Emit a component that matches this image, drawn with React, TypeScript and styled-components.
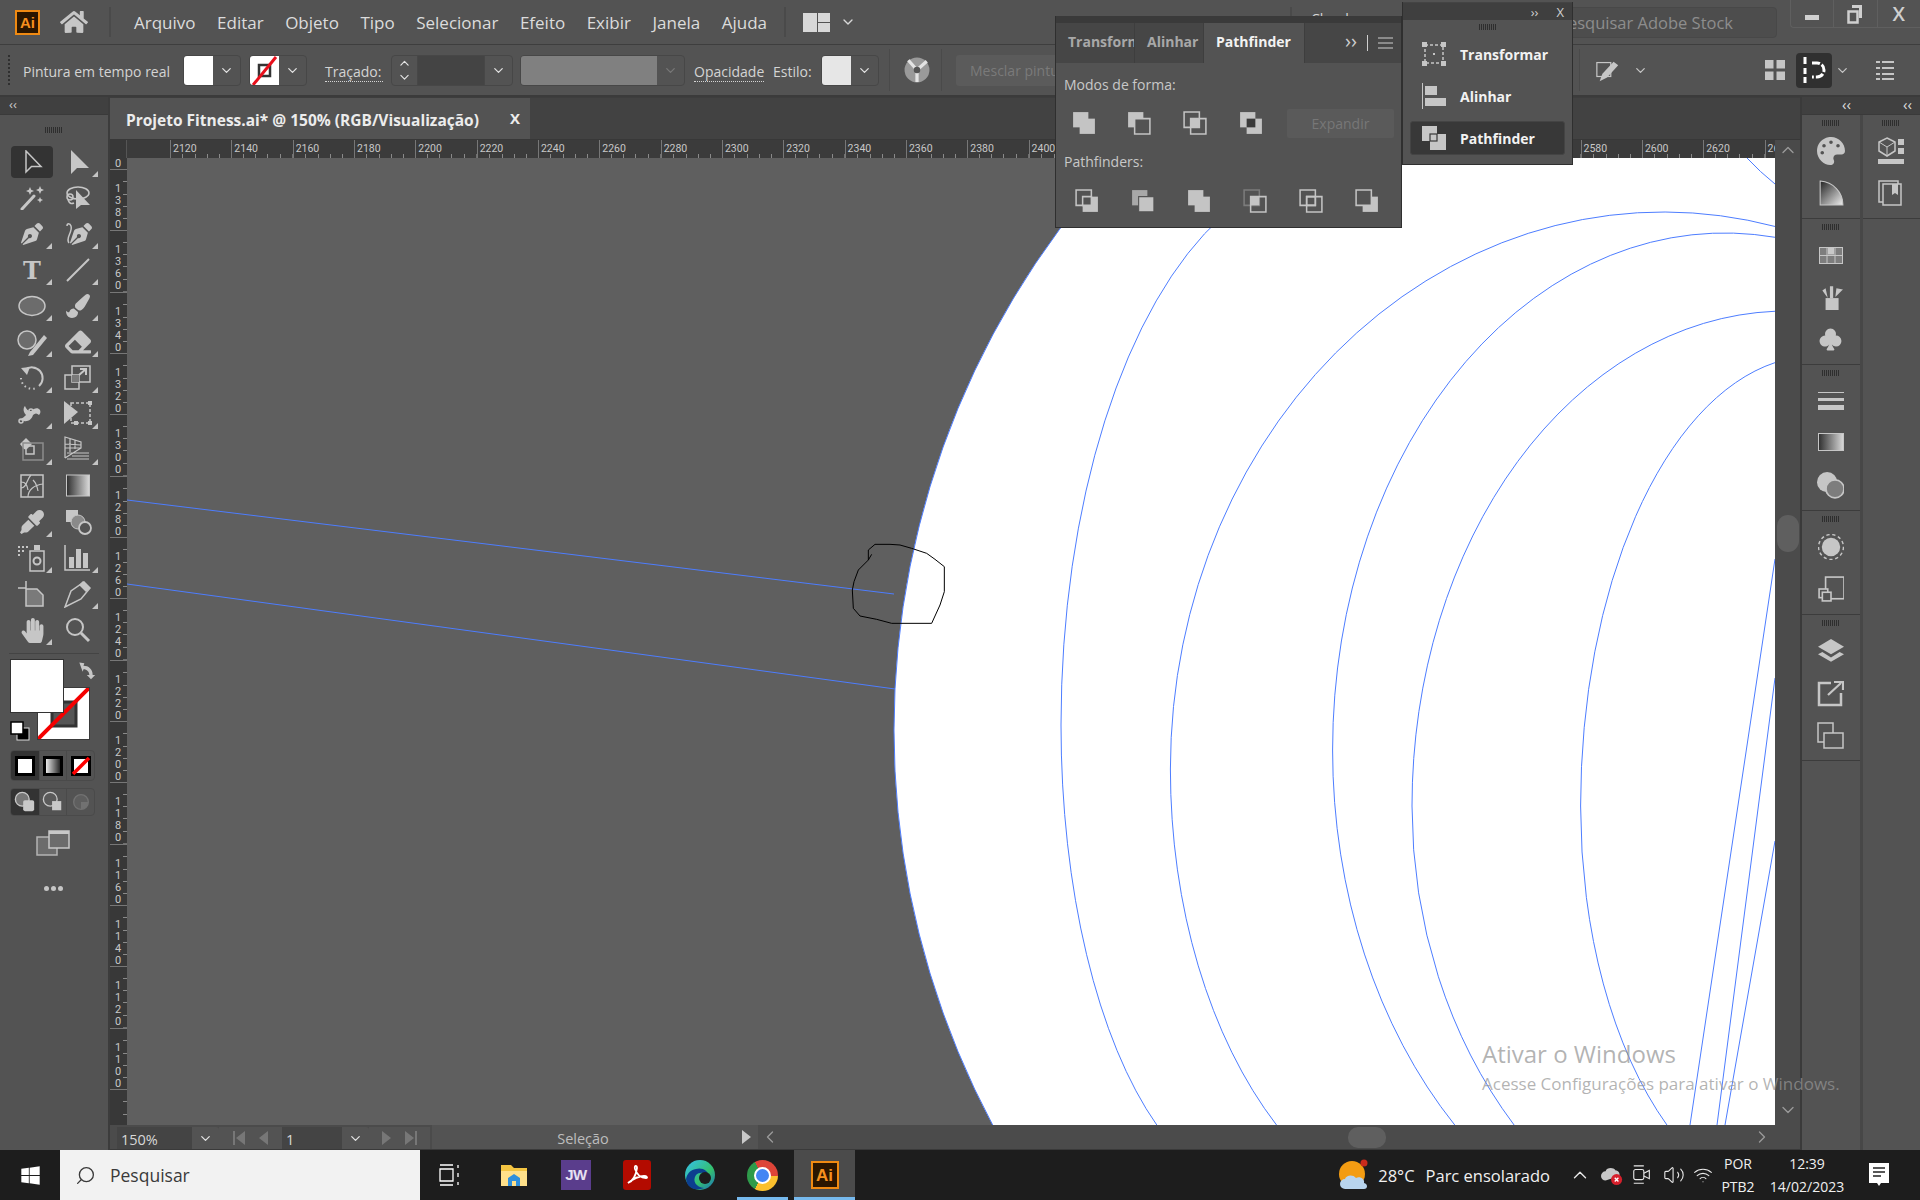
import React from "react";
import styled, { createGlobalStyle } from "styled-components";
import {
  FaHome, FaPenNib, FaPaintBrush, FaEraser, FaEyeDropper, FaHandPaper, FaPalette, FaWindows,
} from "react-icons/fa";
import { BsSuitClubFill } from "react-icons/bs";
import { ChevronDown, ChevronUp, ChevronLeft, ChevronRight, Volume2, Wifi, Search } from "lucide-react";

const UI = `"Open Sans", "Noto Sans", Arial, sans-serif`;
const BG = "#535353";
const ICON = "#c6c6c6";

const Global = createGlobalStyle`
  html, body { margin: 0; padding: 0; background: #1c1c1c; }
  * { box-sizing: border-box; }
`;

const Screen = styled.div`
  position: relative; width: 1920px; height: 1200px; overflow: hidden;
  display: flex; flex-direction: column; background: ${BG}; font-family: ${UI}; color: #d8d8d8;
`;

/* ---------- title bar ---------- */
const TitleBar = styled.header`
  height: 45px; display: flex; align-items: center; background: ${BG}; border-bottom: 1px solid #3e3e3e; flex: none;
`;
const AiLogo = styled.div<{ $size?: number }>`
  width: ${p => p.$size ?? 25}px; height: ${p => p.$size ?? 25}px; background: #2b1600; border: 2px solid #f08a12;
  color: #f6901e; font: 700 ${p => ((p.$size ?? 25) > 25 ? 17 : 15)}px/1 "Liberation Sans", sans-serif;
  display: flex; align-items: center; justify-content: center; flex: none;
`;
const LogoSlot = styled.div`margin-left: 15px; display: flex;`;
const HomeSlot = styled.div`margin-left: 20px; width: 29px; display: flex; color: ${ICON}; font-size: 28px;`;
const TitleSep = styled.div<{ $ml: number }>`width: 2px; height: 30px; background: #4a4a4a; margin-left: ${p => p.$ml}px; flex: none;`;
const MenuList = styled.nav`display: flex; gap: 21.5px; margin-left: 23px; width: 650px;`;
const MenuItem = styled.span`font-size: 17px; color: #dcdcdc; white-space: nowrap;`;
const WorkspaceSlot = styled.div`margin-left: 17px; display: flex; align-items: center; gap: 10px; color: #d8d8d8;`;
const RightCluster = styled.div`margin-left: auto; display: flex; align-items: center; height: 100%; flex: none;`;
const CloudLabel = styled.div`
  width: 210px; height: 30px; border-left: 2px solid #4a4a4a; padding: 2px 0 0 19px; font-size: 14px; color: #d8d8d8; white-space: nowrap;
`;
const StockSearch = styled.div`
  width: 277px; height: 31px; border: 1px solid #484848; border-radius: 4px; background: #4d4d4d;
  color: #8d8d8d; font-size: 16.5px; line-height: 29px; padding-left: 57px; margin-right: 13px; white-space: nowrap;
`;
const WinControls = styled.div`
  width: 130px; height: 28px; align-self: flex-start; display: flex; border: 1px solid #5f5f5f; border-top: 0; border-right: 0;
  border-bottom-left-radius: 4px;
`;
const WinBtn = styled.div`
  flex: 1; display: flex; align-items: center; justify-content: center; color: #cfcfcf; font-size: 20px; font-weight: 600;
  & + & { border-left: 1px solid #5f5f5f; }
`;

/* ---------- control bar ---------- */
const ControlBar = styled.div`
  height: 52px; display: flex; align-items: center; background: ${BG}; border-bottom: 2px solid #3b3b3b; flex: none; font-size: 14px;
`;
const Grip = styled.div`
  width: 2px; height: 30px; margin-left: 8px;
  background: repeating-linear-gradient(180deg, #2f2f2f 0 2px, transparent 2px 4px); flex: none;
`;
const CtlLabel = styled.span<{ $ml: number; $w?: number; $dotted?: boolean }>`
  margin-left: ${p => p.$ml}px; ${p => (p.$w ? `width:${p.$w}px;` : "")} color: #d4d4d4; white-space: nowrap; flex: none; margin-top: 2px;
  ${p => (p.$dotted ? "border-bottom: 1px dotted #d4d4d4; line-height: 19px; margin-top: 3px;" : "")}
`;
const Combo = styled.div<{ $ml: number; $w: number }>`
  margin-left: ${p => p.$ml}px; width: ${p => p.$w}px; height: 31px; display: flex; align-items: stretch; flex: none;
  border: 1px solid #474747; border-radius: 4px; overflow: hidden;
`;
const Swatch = styled.div<{ $c: string }>`width: 29px; background: ${p => p.$c}; flex: none; position: relative;`;
const Caret = styled.div<{ $dim?: boolean }>`
  width: 27px; flex: none; display: flex; align-items: center; justify-content: center; color: ${p => (p.$dim ? "#787878" : "#e2e2e2")};
`;
const Stepper = styled.div`width: 26px; flex: none; display: flex; flex-direction: column; align-items: center; justify-content: center; color: #e2e2e2; border-right: 1px solid #474747;`;
const DarkField = styled.div`flex: 1; background: #444444; border-right: 1px solid #474747;`;
const GreyBlock = styled.div`width: 136px; background: #808080; flex: none;`;
const MergeBtn = styled.div`
  margin-left: 14px; width: 250px; height: 31px; background: #5b5b5b; border-radius: 3px; color: #7a7a7a;
  line-height: 31px; padding-left: 14px; flex: none; white-space: nowrap;
`;
const CtlSep = styled.div<{ $ml: number }>`width: 1px; height: 42px; background: #4a4a4a; margin-left: ${p => p.$ml}px; flex: none;`;
const CtlIcon = styled.div<{ $ml: number; $w?: number }>`
  margin-left: ${p => p.$ml}px; width: ${p => p.$w ?? 26}px; display: flex; justify-content: center; color: ${ICON}; flex: none;
`;
const SnapBtn = styled.div`
  margin-left: 10px; width: 36px; height: 35px; border-radius: 4px; background: #303030; display: flex;
  align-items: center; justify-content: center; flex: none;
`;

/* ---------- workspace ---------- */
const Workspace = styled.div`flex: 1; min-height: 0; display: flex;`;

const LeftTools = styled.aside`width: 110px; flex: none; display: flex; flex-direction: column; border-right: 2px solid #3c3c3c;`;
const CollapseStrip = styled.div`
  height: 18px; background: #404040; color: #c8c8c8; font-size: 13px; line-height: 15px; padding-left: 9px; flex: none; border-bottom: 1px solid #3a3a3a;
`;
const GripH = styled.div`
  height: 6px; width: 18px;
  background: repeating-linear-gradient(90deg, #2e2e2e 0 1px, transparent 1px 2px);
`;
const GripRow = styled.div<{ $h: number }>`height: ${p => p.$h}px; display: flex; align-items: center; justify-content: center; flex: none;`;
const ToolGrid = styled.div`display: grid; grid-template-columns: 46px 46px; grid-auto-rows: 36px; padding-left: 9px; flex: none;`;
const ToolCell = styled.div<{ $sel?: boolean }>`
  position: relative; display: flex; align-items: center; justify-content: center; color: ${ICON}; border-radius: 4px;
  ${p => (p.$sel ? "background:#333333; margin: 2px;" : "")}
`;
const Flyout = styled.span`
  position: absolute; right: 3px; bottom: 3px; width: 0; height: 0;
  border-left: 6px solid transparent; border-bottom: 6px solid #c4c4c4;
`;
const ToolRule = styled.div`height: 1px; background: #444; margin: 5px 9px 5px; flex: none;`;
const ColorArea = styled.div`position: relative; height: 86px; margin-bottom: 5px; flex: none;`;
const FillBox = styled.div`position: absolute; left: 10px; top: 0; width: 54px; height: 54px; background: #fff; border: 1px solid #333; z-index: 2;`;
const StrokeBox = styled.div`position: absolute; left: 37px; top: 28px; width: 53px; height: 53px; border: 1px solid #3a3a3a;`;
const SwapSlot = styled.div`position: absolute; left: 76px; top: 1px; color: ${ICON};`;
const DefaultSlot = styled.div`position: absolute; left: 10px; top: 62px;`;
const Segments = styled.div<{ $h: number }>`
  margin: 0 13px 7px 10px; height: ${p => p.$h}px; display: grid; grid-template-columns: 1fr 1fr 1fr; border: 1px solid #4a4a4a; border-radius: 4px; overflow: hidden; flex: none;
`;
const Seg = styled.div<{ $sel?: boolean }>`
  display: flex; align-items: center; justify-content: center; background: ${p => (p.$sel ? "#333" : "transparent")};
  & + & { border-left: 1px solid #4a4a4a; }
`;
const CenterSlot = styled.div<{ $mt: number }>`margin-top: ${p => p.$mt}px; display: flex; justify-content: center; gap: 2px; padding-right: 2px; flex: none;`;
const Dot = styled.span`width: 5px; height: 5px; border-radius: 50%; background: ${ICON};`;

/* ---------- document area ---------- */
const DocArea = styled.main`width: 1690px; flex: none; display: flex; flex-direction: column; min-width: 0;`;
const TabStrip = styled.div`height: 43px; flex: none; background: #424242; display: flex; border-top: 1px solid #3d3d3d; border-bottom: 1px solid #383838;`;
const DocTab = styled.div`
  width: 420px; background: ${BG}; display: flex; align-items: center; justify-content: space-between;
  padding: 3px 10px 0 16px; font-weight: 700; font-size: 15.5px; color: #ececec; white-space: nowrap;
`;
const TabClose = styled.span`font-size: 15px; font-weight: 700; margin-top: -5px;`;
const RulerRowH = styled.div`height: 18px; flex: none; display: flex; background: #3b3b3b;`;
const RulerCorner = styled.div`width: 17px; flex: none; border-right: 1px solid #555; position: relative; background: #383838;`;
const RulerTrack = styled.div`flex: 1; min-width: 0; display: flex; overflow: hidden; padding-left: 43px;`;
const RulerH = styled.div`
  width: 61.33px; flex: none; border-left: 1px solid #777; padding: 2px 0 0 2px; font: 10.5px/13px Roboto, sans-serif; color: #c8c8c8;
  background: repeating-linear-gradient(90deg, transparent 0 11.27px, #8a8a8a 11.27px 12.27px) bottom / 100% 4px no-repeat;
`;
const ScrollCap = styled.div`width: 25px; flex: none; background: #4a4a4a; display: flex; justify-content: center; align-items: flex-start; color: #9a9a9a;`;
const CanvasRow = styled.div`height: 967px; flex: none; display: flex;`;
const RulerV = styled.div`width: 17px; flex: none; background: #383838; overflow: hidden; display: flex; flex-direction: column;`;
const RulerVCell = styled.div<{ $first?: boolean }>`
  height: ${p => (p.$first ? 11 : 61.33)}px; flex: none; border-top: ${p => (p.$first ? "0" : "1px solid #777")};
  padding-top: ${p => (p.$first ? 0 : 13)}px; display: flex; flex-direction: column; align-items: flex-start; padding-left: 5px;
  font: 11px/12px Roboto, sans-serif; color: #c8c8c8; overflow: hidden;
  background: repeating-linear-gradient(180deg, transparent 0 11.27px, #8a8a8a 11.27px 12.27px) right / 4px 100% no-repeat;
`;
const Canvas = styled.svg`width: 1648px; height: 967px; flex: none; display: block; background: #5f5f5f;`;
const ScrollV = styled.div`
  width: 25px; flex: none; background: #4b4b4b; display: flex; flex-direction: column; align-items: center; color: #9a9a9a; position: relative;
`;
const ThumbV = styled.div`width: 22px; height: 37px; border-radius: 11px; background: #5f5f5f; margin-top: 357px;`;
const ScrollVBottom = styled.div`margin-top: auto;`;
const StatusBar = styled.div`
  height: 25px; flex: none; display: flex; align-items: stretch; background: #4b4b4b; padding-left: 7px; font-size: 14.5px; color: #d8d8d8; border-bottom: 1px solid #3a3a3a;
`;
const StatusCombo = styled.div<{ $w: number; $ml?: number }>`
  width: ${p => p.$w}px; margin-left: ${p => p.$ml ?? 0}px; margin-top: 2px; display: flex; flex: none; background: ${BG};
  border-radius: 3px 3px 0 0;
`;
const StatusField = styled.div`flex: 1; background: #444; padding-left: 4px; line-height: 25px;`;
const StatusCaret = styled.div`width: 27px; display: flex; align-items: center; justify-content: center; color: #e2e2e2;`;
const NavGroup = styled.div<{ $w: number }>`
  width: ${p => p.$w}px; flex: none; display: flex; align-items: center; justify-content: space-evenly; color: #777; font-size: 12px; background: ${BG}; margin-top: 2px;
`;
const StatusMode = styled.div`
  width: 302px; margin-left: 2px; text-align: center; line-height: 27px; color: #bdbdbd; background: ${BG}; flex: none;
`;
const PlayBtn = styled.div`width: 24px; flex: none; display: flex; align-items: center; justify-content: center; background: ${BG};
  &::before { content: ""; border-left: 9px solid #c8c8c8; border-top: 7px solid transparent; border-bottom: 7px solid transparent; }
`;
const HScroll = styled.div`flex: 1; display: flex; align-items: center; color: #9a9a9a; padding-left: 2px;`;
const ThumbH = styled.div`width: 38px; height: 21px; border-radius: 10px; background: #5f5f5f; margin-left: 568px;`;
const HEnd = styled.div`margin-left: auto; margin-right: 28px; display: flex;`;

/* ---------- right dock ---------- */
const RightDock = styled.aside`width: 120px; flex: none; display: flex; flex-direction: column; border-left: 2px solid #3a3a3a;`;
const DockHead = styled.div`height: 18px; flex: none; background: #404040; display: flex; color: #dcdcdc; font-size: 15px; line-height: 15px; border-bottom: 1px solid #3a3a3a;`;
const DockHeadCell = styled.div`text-align: right; padding-right: 8px; &:first-child { width: 57px; } &:last-child { flex: 1; }`;
const DockCols = styled.div`flex: 1; display: flex; gap: 3px; background: #474747;`;
const DockCol = styled.div`flex: 1; display: flex; flex-direction: column; background: ${BG};`;
const DockGroup = styled.div`
  flex: none; display: flex; flex-direction: column; padding-bottom: 4px; border-bottom: 1px solid #3c3c3c;
`;
const DockBtn = styled.div`height: 42px; display: flex; align-items: center; justify-content: center; color: ${ICON};`;

/* ---------- taskbar ---------- */
const Taskbar = styled.footer`
  height: 50px; flex: none; background: #1d1d1d; display: flex; align-items: center; color: #f0f0f0;
`;
const StartBtn = styled.div`width: 60px; display: flex; justify-content: center; color: #fff; font-size: 21px; flex: none;`;
const SearchBox = styled.div`
  width: 360px; height: 50px; background: #f2f2f2; color: #3a3a3a; display: flex; align-items: center; gap: 14px; padding-left: 15px; font-size: 17.5px; flex: none;
`;
const TaskBtn = styled.div<{ $w: number; $ml?: number; $active?: boolean; $line?: boolean }>`
  position: relative; width: ${p => p.$w}px; margin-left: ${p => p.$ml ?? 0}px; height: 50px; display: flex; align-items: center; justify-content: center; flex: none;
  background: ${p => (p.$active ? "#4b4b4b" : "transparent")};
  ${p => (p.$line ? `&::after { content: ""; position: absolute; left: 0; right: 0; bottom: 0; height: 3px; background: #76b9ed; }` : "")}
`;
const JwTile = styled.div`
  width: 30px; height: 30px; background: #5a3d8c; color: #e6e0f2; font: 700 15px/30px "Liberation Sans", sans-serif; text-align: center; letter-spacing: -0.5px;
`;
const ChromeBall = styled.div`
  width: 31px; height: 31px; border-radius: 50%; display: flex; align-items: center; justify-content: center;
  background: conic-gradient(from -30deg, #dd4438 0 120deg, #fbc02d 120deg 240deg, #2e9b4a 240deg 360deg);
  &::after { content: ""; width: 13px; height: 13px; border-radius: 50%; background: #4285f4; border: 2.5px solid #fff; box-sizing: content-box; }
`;
const Tray = styled.div`margin-left: auto; display: flex; align-items: center; height: 100%; flex: none;`;
const WeatherText = styled.span<{ $ml: number }>`margin-left: ${p => p.$ml}px; font-size: 16.5px; white-space: nowrap;`;
const TrayIcon = styled.div<{ $ml: number }>`margin-left: ${p => p.$ml}px; display: flex; color: #e8e8e8; flex: none;`;
const TrayStack = styled.div<{ $w: number; $ml: number }>`
  width: ${p => p.$w}px; margin-left: ${p => p.$ml}px; display: flex; flex-direction: column; align-items: center; font-size: 14px; line-height: 23px; flex: none; white-space: nowrap;
`;

/* ---------- floating panels ---------- */
const Panel = styled.section<{ $l: number; $t: number; $w: number; $h: number }>`
  position: absolute; left: ${p => p.$l}px; top: ${p => p.$t}px; width: ${p => p.$w}px; height: ${p => p.$h}px;
  background: ${BG}; border: 1px solid #2f2f2f; border-top: 0; display: flex; flex-direction: column; z-index: 5;
`;
const PanelDragBar = styled.div`height: 7px; background: #3a3a3a; flex: none;`;
const PanelTabs = styled.div`height: 40px; background: #464646; display: flex; align-items: center; flex: none; font-size: 14px; font-weight: 700;`;
const PanelTab = styled.div<{ $w: number; $active?: boolean }>`
  width: ${p => p.$w}px; height: 100%; flex: none; overflow: hidden; white-space: nowrap; line-height: 38px; padding-left: 12px;
  color: ${p => (p.$active ? "#f2f2f2" : "#a8a8a8")}; background: ${p => (p.$active ? BG : "transparent")};
  border-right: 1px solid #3e3e3e;
`;
const PanelTabTools = styled.div`margin-left: auto; display: flex; align-items: center; gap: 10px; padding-right: 8px; color: #cfcfcf; font-weight: 400;`;
const TabGlyph = styled.span`font-size: 20px; line-height: 20px; margin-top: -4px;`;
const TabDivider = styled.span`width: 1px; height: 16px; background: #cfcfcf;`;
const PanelHeading = styled.div<{ $mt: number }>`margin: ${p => p.$mt}px 0 0 8px; font-size: 14px; line-height: 20px; color: #c8c8c8; flex: none;`;
const ModeRow = styled.div`height: 30px; margin-top: 13px; display: flex; align-items: center; padding-left: 16px; flex: none;`;
const ModeBtn = styled.div<{ $w: number }>`width: ${p => p.$w}px; flex: none;`;
const ExpandBtn = styled.div`
  width: 107px; height: 29px; margin-left: 24px; border-radius: 2px; background: #5a5a5a; color: #777; text-align: center; line-height: 29px; font-size: 14px; flex: none;
`;
const FinderRow = styled.div`height: 30px; margin-top: 14px; display: flex; align-items: center; padding-left: 19px; gap: 32px; flex: none;`;
const MiniTop = styled.div`
  height: 18px; background: #3f3f3f; color: #cfcfcf; display: flex; align-items: center; justify-content: flex-end; gap: 18px; padding-right: 8px; font-size: 13px; flex: none; border-top: 1px solid #444;
`;
const MiniRow = styled.div<{ $sel?: boolean }>`
  height: 34px; margin: 4px 7px; display: flex; align-items: center; gap: 13px; padding-left: 10px; border-radius: 3px;
  font-weight: 700; font-size: 14px; color: #f2f2f2; background: ${p => (p.$sel ? "#383838" : "transparent")}; border: 1px solid ${p => (p.$sel ? "#444" : "transparent")};
`;

/* ---------- watermark ---------- */
const Watermark = styled.div`position: absolute; left: 1482px; top: 1037px; z-index: 4; pointer-events: none; color: rgba(150,150,150,0.72); white-space: nowrap;`;
const WaterTitle = styled.div`font-size: 24px; line-height: 34px;`;
const WaterSub = styled.div`font-size: 17px; line-height: 25px;`;

/* ---------- drawing helpers ---------- */
const Svg = ({ s = 24, w, h, vb, children }: { s?: number; w?: number; h?: number; vb?: string; children: React.ReactNode }) => (
  <svg width={w ?? s} height={h ?? s} viewBox={vb ?? `0 0 ${s} ${s}`} fill="currentColor" style={{ display: "block" }}>{children}</svg>
);
const V24 = "0 0 24 24";
const star = (x: number, y: number, r: number) =>
  `M${x} ${y - r}L${x + r * .3} ${y - r * .3}L${x + r} ${y}L${x + r * .3} ${y + r * .3}L${x} ${y + r}L${x - r * .3} ${y + r * .3}L${x - r} ${y}L${x - r * .3} ${y - r * .3}Z`;
const S = { fill: "none", stroke: "currentColor", strokeWidth: 1.5 } as const;

const toolIcons: [React.ReactNode, boolean][] = [
  [<Svg key="a"><path d="M6 1v21l5.500-5.500h9.500z" {...S} /></Svg>, false],
  [<Svg key="b"><path d="M5 0v24l6-6h12z" /></Svg>, true],
  [<Svg key="c"><path d="M2 23L14 10" {...S} strokeWidth={3} strokeLinecap="round" /><path d={star(10, 5, 4)} /><path d={star(20, 4, 4)} /><path d={star(20, 14, 3)} /></Svg>, false],
  [<Svg key="d" s={27}><ellipse cx="13" cy="8" rx="11" ry="6" {...S} /><circle cx="5" cy="12" r="3" {...S} /><path d="M3 15q2 5 6 3" {...S} /><path d="M11 5v19l5-4h9z" /></Svg>, false],
  [<FaPenNib key="e" size={22} />, true],
  [<Svg key="f" s={28}><path d="M5 23C1 18 9 12 7 6 6 3 3 3 3 6" {...S} /><FaPenNib x={6} y={3} size={22} /></Svg>, true],
  [<Svg key="g" s={26}><text x="13" y="22" textAnchor="middle" fontFamily="'DejaVu Serif', serif" fontWeight="700" fontSize="24">T</text></Svg>, true],
  [<Svg key="h"><path d="M1 23L23 1" {...S} strokeWidth={2} /></Svg>, true],
  [<Svg key="i" w={28} h={22} vb="0 0 28 22"><ellipse cx="14" cy="11" rx="13" ry="9.500" fill="#6c6c6c" stroke="currentColor" strokeWidth="1.500" /></Svg>, true],
  [<FaPaintBrush key="j" size={24} />, true],
  [<Svg key="k" s={32}><circle cx="11" cy="14" r="9" fill="#6c6c6c" stroke="currentColor" strokeWidth="1.500" /><path d="M14 26l-2 4 5-1L31 12l-3-3z" /></Svg>, true],
  [<FaEraser key="l" size={26} />, true],
  [<Svg key="m" s={26}><path d="M6 5A10 10 0 1 1 20 21" {...S} strokeWidth={2} /><path d="M2 3l9-1-3 8z" /><path d="M2 13a11 11 0 0 0 15 10" {...S} strokeDasharray="1.500 3" strokeWidth={2} /></Svg>, true],
  [<Svg key="n" s={28}><rect x="8" y="2" width="18" height="16" {...S} /><rect x="1" y="11" width="14" height="14" {...S} /><rect x="8" y="11" width="7" height="7" fill="#7a7a7a" /><path d="M15 11l7-6M16 5h6v6" {...S} strokeWidth={2} /></Svg>, true],
  [<Svg key="o" s={29}><path d="M1 20c4-2 5-3 7-5-3-3-3-7-1-9 1 3 3 5 6 5 3-3 7-4 9-1 1 2 0 4-1 5-2-2-4-2-6 0-1 4-5 7-9 6z" /><circle cx="3" cy="21" r="2" {...S} /><circle cx="13" cy="11" r="2" {...S} /></Svg>, true],
  [<Svg key="p" s={30}><path d="M1 2l14 11-14 12z" /><rect x="8" y="4" width="19" height="20" {...S} strokeDasharray="3 2" /><rect x="25" y="2" width="4" height="4" /><rect x="25" y="22" width="4" height="4" /><rect x="11" y="22" width="4" height="4" /></Svg>, true],
  [<Svg key="q" s={28}><path d="M2 8l6-6 6 6-5 5c-2 1-3 0-4-1z" /><rect x="8" y="10" width="8" height="8" {...S} /><rect x="5" y="7" width="20" height="17" {...S} stroke="#8c8c8c" /></Svg>, true],
  [<Svg key="r" s={28}><path d="M1 1l16 5v6H1zM1 1v21M1 22l16-10M6 3v13M11 4v9M1 8l16 1M3 17h22M8 20h17M3 23h22" {...S} strokeWidth={1.200} /></Svg>, true],
  [<Svg key="s"><rect x="1" y="1" width="22" height="22" {...S} /><path d="M1 14c6 0 5-8 10-13M8 23c0-7 6-12 15-13M13 6c3 3 4 5 5 11M1 8c5 0 6 3 7 8" {...S} strokeWidth={1.200} /></Svg>, false],
  [<Svg key="t"><defs><linearGradient id="gt"><stop offset="0" stopColor="#2f2f2f" /><stop offset="1" stopColor="#dadada" /></linearGradient></defs><rect x=".5" y="1" width="23" height="21" fill="url(#gt)" stroke="currentColor" /></Svg>, false],
  [<FaEyeDropper key="u" size={24} />, true],
  [<Svg key="v" s={27}><rect x="1" y="1" width="12" height="12" /><circle cx="13" cy="13" r="7" fill="#8a8a8a" stroke="currentColor" /><circle cx="20" cy="19" r="6" fill="#535353" stroke="currentColor" strokeWidth="1.800" /></Svg>, false],
  [<Svg key="w" s={30}><path d="M1 3h2v2H1zM5 3h2v2H5zM9 3h2v2H9zM1 7h2v2H1zM5 7h2v2H5zM1 11h2v2H1z" /><rect x="13" y="8" width="14" height="20" {...S} /><rect x="17" y="2" width="6" height="5" /><circle cx="20" cy="18" r="3.500" {...S} strokeWidth={2} /></Svg>, true],
  [<Svg key="x" s={28}><path d="M1 1v25h25" {...S} /><rect x="5" y="13" width="5" height="11" /><rect x="12" y="5" width="5" height="19" /><rect x="19" y="9" width="5" height="15" /></Svg>, true],
  [<Svg key="y" s={28}><path d="M0 8h8M8 1v8" {...S} /><path d="M8 9h11l6 6v11H8z" fill="#7a7a7a" stroke="currentColor" strokeWidth="1.500" /></Svg>, false],
  [<Svg key="z" s={28}><path d="M1 27l6-16L20 2l6 6-9 11z" {...S} strokeWidth={1.500} /><path d="M19 1l7 7-4 4-7-7z" /></Svg>, true],
  [<FaHandPaper key="aa" size={25} />, true],
  [<Svg key="ab" s={26}><circle cx="10" cy="10" r="8" {...S} strokeWidth={2} /><path d="M16 16l8 8" {...S} strokeWidth={3} /></Svg>, false],
];

type Kind = "unite" | "minus" | "intersect" | "exclude" | "divide" | "trim" | "merge" | "crop" | "outline" | "minusback";
const bk = "M1 1h14v14H1z";
const fr = "M7 7h14v14H7z";
const PF = ({ k }: { k: Kind }) => {
  const c = "#c4c4c4";
  const sw = { fill: "none", stroke: c, strokeWidth: 1.4 };
  return (
    <Svg s={24} vb="0 0 22 22">
      {k === "unite" && <><path d={bk} fill={c} /><path d={fr} fill={c} /></>}
      {k === "minus" && <><path d={bk} fill={c} /><path d={fr} fill="#535353" stroke={c} strokeWidth="1.400" /></>}
      {k === "intersect" && <><path d={bk} {...sw} /><path d={fr} {...sw} /><path d="M7 7h8v8H7z" fill={c} /></>}
      {k === "exclude" && <><path d={bk} fill={c} /><path d={fr} fill={c} /><path d="M7 7h8v8H7z" fill="#3a3a3a" /></>}
      {k === "divide" && <><path d={bk} {...sw} /><path d={fr} fill={c} /><path d="M7 7h8v8H7z" fill="#535353" stroke={c} strokeWidth="1.400" /></>}
      {k === "trim" && <><path d={bk} fill="#a8a8a8" /><path d={fr} fill={c} stroke="#535353" /></>}
      {k === "merge" && <><path d="M1 1h14v14H1z" fill="#c4c4c4" /><path d={fr} fill={c} /></>}
      {k === "crop" && <><path d={bk} fill="none" stroke="#7c7c7c" strokeWidth="1.400" /><path d={fr} {...sw} /><path d="M7 7h8v8H7z" fill={c} /></>}
      {k === "outline" && <><path d={bk} {...sw} /><path d={fr} {...sw} /><path d="M7 7h8v8H7z" {...sw} /></>}
      {k === "minusback" && <><path d={fr} fill={c} /><path d={bk} fill="#535353" stroke={c} strokeWidth="1.400" /></>}
    </Svg>
  );
};

const grip = <GripRow $h={15}><GripH /></GripRow>;

const dockIcons: Record<string, React.ReactNode> = {
  palette: <FaPalette size={28} />,
  guide: <Svg s={26} vb={V24}><defs><linearGradient id="gg" x2="1" y2="1"><stop offset="0" stopColor="#222" /><stop offset="1" stopColor="#eee" /></linearGradient></defs><path d="M2 1c12 1 21 10 21 22H2z" fill="url(#gg)" stroke="currentColor" /></Svg>,
  swatches: <Svg w={24} h={17} vb="0 0 24 17"><rect x=".5" y=".5" width="23" height="16" fill="#7d7d7d" stroke="currentColor" /><path d="M8 0v17M16 0v17M0 8.500h24" stroke="currentColor" /><rect x="9" y="1" width="6" height="6.500" fill="#c8c8c8" /></Svg>,
  brushes: <Svg s={26} vb={V24}><rect x="7" y="13" width="12" height="11" /><path d="M11 13V2h3v11zM9 13L4 6l3-2z" /><path d="M16 12l1-8 6 1z" /></Svg>,
  club: <BsSuitClubFill size={25} />,
  stroke: <Svg w={26} h={20} vb="0 0 26 20"><rect y="1" width="26" height="1" /><rect y="7" width="26" height="3" /><rect y="14" width="26" height="5" /></Svg>,
  grad: <Svg w={26} h={20} vb="0 0 26 20"><defs><linearGradient id="gd"><stop offset="0" stopColor="#2f2f2f" /><stop offset="1" stopColor="#dadada" /></linearGradient></defs><rect x=".5" y=".5" width="25" height="17" fill="url(#gd)" stroke="currentColor" /></Svg>,
  trans: <Svg s={27} vb={V24}><circle cx="9" cy="9" r="9" /><circle cx="16" cy="15" r="8" fill="#7d7d7d" stroke="currentColor" strokeWidth="1.500" /></Svg>,
  appear: <Svg s={26} vb={V24}><circle cx="12" cy="12" r="8.500" /><circle cx="12" cy="12" r="11.500" fill="none" stroke="currentColor" strokeWidth="1.300" strokeDasharray="3 2.500" /></Svg>,
  styles: <Svg s={26} vb={V24}><rect x="7" y="1" width="17" height="20" fill="none" stroke="currentColor" strokeWidth="1.500" /><rect x="1" y="12" width="8" height="8" fill="#535353" stroke="currentColor" strokeWidth="1.500" /><rect x="4" y="15" width="8" height="8" fill="#535353" stroke="currentColor" strokeWidth="1.500" /></Svg>,
  layers: <Svg s={26} vb={V24}><path d="M12 1l12 7-12 7L0 8z" /><path d="M4 13l8 5 8-5 4 2-12 7-12-7z" /></Svg>,
  exportI: <Svg s={27}><path d="M14 3H2v22h22V13" fill="none" stroke="currentColor" strokeWidth="2.500" /><path d="M11 15L24 3M17 2h9v8" fill="none" stroke="currentColor" strokeWidth="2.200" /></Svg>,
  boards: <Svg s={27}><rect x="1" y="1" width="15" height="19" fill="none" stroke="currentColor" strokeWidth="1.500" /><rect x="7" y="11" width="19" height="15" fill="#535353" stroke="currentColor" strokeWidth="1.500" /></Svg>,
  cube: <Svg s={28}><path d="M10 1l8 4v9l-8 5-8-5V5z" fill="none" stroke="currentColor" strokeWidth="1.500" /><path d="M2 5l8 5 8-5M10 10v9" fill="none" stroke="currentColor" /><rect x="21" y="2" width="6" height="6" /><rect x="21" y="11" width="6" height="6" /><rect x="1" y="22" width="26" height="5" /></Svg>,
  lib: <Svg s={26}><rect x="1" y="1" width="19" height="21" fill="none" stroke="currentColor" strokeWidth="1.500" /><rect x="5" y="4" width="18" height="21" fill="#535353" stroke="currentColor" strokeWidth="1.500" /><path d="M14 4h6v11l-3-2-3 2z" /></Svg>,
};

const Dock1: string[][] = [["palette", "guide"], ["swatches", "brushes", "club"], ["stroke", "grad", "trans"], ["appear", "styles"], ["layers", "exportI", "boards"]];

/* canvas geometry: each contour is two elliptical arcs meeting at its leftmost point */
const BOTTOM = 1125;
const contour = (lx: number, ly: number, xStart: number, tr: [number, number], br: [number, number]) => {
  const u = xStart - lx;
  const yStart = ly - tr[1] * Math.sqrt((2 * u) / tr[0] - (u * u) / (tr[0] * tr[0]));
  const dy = BOTTOM - ly;
  const xEnd = lx + br[0] * (1 - Math.sqrt(1 - (dy * dy) / (br[1] * br[1])));
  return `M${xStart} ${yStart}A${tr[0]} ${tr[1]} 0 0 0 ${lx} ${ly}A${br[0]} ${br[1]} 0 0 0 ${xEnd} ${BOTTOM}`;
};
const contours = [
  contour(1061, 725, 1222, [267, 554], [198, 467]),
  contour(1170.4, 769, 1775, [493, 557], [291, 461]),
  contour(1332.6, 750, 1775, [392, 517], [392, 517]),
  contour(1412, 806, 1775, [375, 495], [400, 478]),
  contour(1580.6, 806, 1775, [234.5, 450], [220, 401.6]),
];
const strokes = "M1747 158Q1760 172 1775 184M1775 559L1690 1125M1775 678L1717 1125M1775 841L1725 1125";
const scribble = [[155,103],[145,120],[145,90],[165,73],[210,73],[240,75],[275,85],[320,100],[345,118],[373,140],[373,215],[360,255],[335,310],[215,310],[170,298],[120,288],[100,265],[97,210],[102,185],[115,150],[145,120]]
  .map(([x, y]) => `${820 + x / 3},${520 + y / 3}`).join(" ");

const menu = ["Arquivo", "Editar", "Objeto", "Tipo", "Selecionar", "Efeito", "Exibir", "Janela", "Ajuda"];
const rulerH = Array.from({ length: 27 }, (_, i) => 2120 + i * 20);
const rulerV = Array.from({ length: 15 }, (_, i) => 1380 - i * 20);

export default function App() {
  return (
    <Screen>
      <Global />
      <TitleBar>
        <LogoSlot><AiLogo>Ai</AiLogo></LogoSlot>
        <HomeSlot><FaHome /></HomeSlot>
        <TitleSep $ml={20} />
        <MenuList>{menu.map(m => <MenuItem key={m}>{m}</MenuItem>)}</MenuList>
        <TitleSep $ml={0} />
        <WorkspaceSlot>
          <Svg w={27} h={19} vb="0 0 27 19"><rect width="14" height="19" /><rect x="15" width="12" height="9" /><rect x="15" y="10" width="12" height="9" /></Svg>
          <ChevronDown size={16} strokeWidth={2} />
        </WorkspaceSlot>
        <RightCluster>
          <CloudLabel>Cloud</CloudLabel>
          <StockSearch>Pesquisar Adobe Stock</StockSearch>
          <WinControls>
            <WinBtn><Svg w={14} h={14} vb="0 0 14 14"><rect y="8" width="14" height="5" /></Svg></WinBtn>
            <WinBtn><Svg w={16} h={20} vb="0 0 16 20"><path d="M5 1h10v13h-3V4H5z" /><rect x="1.500" y="7.500" width="9" height="11" fill="none" stroke="currentColor" strokeWidth="2.500" /></Svg></WinBtn>
            <WinBtn>X</WinBtn>
          </WinControls>
        </RightCluster>
      </TitleBar>

      <ControlBar>
        <Grip />
        <CtlLabel $ml={13} $w={150}>Pintura em tempo real</CtlLabel>
        <Combo $ml={10} $w={58}><Swatch $c="#fff" /><Caret><ChevronDown size={15} strokeWidth={2} /></Caret></Combo>
        <Combo $ml={8} $w={58}>
          <Swatch $c="#fff">
            <Svg w={29} h={29} vb="0 0 29 29"><rect x="9" y="9" width="11" height="11" fill="none" stroke="#333" strokeWidth="2.500" /><path d="M3 29L26 1" stroke="#e8101c" strokeWidth="3" /></Svg>
          </Swatch>
          <Caret><ChevronDown size={15} strokeWidth={2} /></Caret>
        </Combo>
        <CtlLabel $ml={18} $w={58} $dotted>Traçado:</CtlLabel>
        <Combo $ml={8} $w={122}>
          <Stepper><ChevronUp size={15} strokeWidth={2} /><ChevronDown size={15} strokeWidth={2} /></Stepper>
          <DarkField />
          <Caret><ChevronDown size={15} strokeWidth={2} /></Caret>
        </Combo>
        <Combo $ml={7} $w={165}><GreyBlock /><Caret $dim><ChevronDown size={15} strokeWidth={2} /></Caret></Combo>
        <CtlLabel $ml={9} $w={70} $dotted>Opacidade</CtlLabel>
        <CtlLabel $ml={9} $w={42}>Estilo:</CtlLabel>
        <Combo $ml={6} $w={58}><Swatch $c="#e6e6e6" /><Caret><ChevronDown size={15} strokeWidth={2} /></Caret></Combo>
        <CtlSep $ml={10} />
        <CtlIcon $ml={14}>
          <Svg s={26} vb={V24}><circle cx="12" cy="12" r="11.500" fill="#9a9a9a" /><path d="M12 12L4 3M12 12l9-8M12 12l0 11" stroke="#e4e4e4" strokeWidth="3" /><circle cx="12" cy="12" r="3" fill="#555" /></Svg>
        </CtlIcon>
        <CtlSep $ml={11} />
        <MergeBtn>Mesclar pintura</MergeBtn>
        <CtlSep $ml={373} />
        <CtlIcon $ml={15}>
          <Svg s={28}><rect x="2" y="6" width="15" height="15" fill="none" stroke="currentColor" strokeWidth="1.300" /><path d="M5 26l3-8L20 5l5 4-12 13z" /></Svg>
        </CtlIcon>
        <CtlIcon $ml={11} $w={16}><ChevronDown size={15} strokeWidth={2} /></CtlIcon>
        <CtlIcon $ml={116} $w={22}><Svg s={20}><rect width="8.500" height="8.500" /><rect x="11.500" width="8.500" height="8.500" /><rect y="11.500" width="8.500" height="8.500" /><rect x="11.500" y="11.500" width="8.500" height="8.500" /></Svg></CtlIcon>
        <SnapBtn>
          <Svg w={24} h={26} vb="0 0 24 26"><path d="M3 0v7M3 11v6M3 20v6" stroke="#fff" strokeWidth="3" /><path d="M10 6h5a7 7 0 0 1 0 14h-5" fill="none" stroke="#fff" strokeWidth="3" strokeDasharray="8 2" /></Svg>
        </SnapBtn>
        <CtlIcon $ml={1} $w={18}><ChevronDown size={15} strokeWidth={2} /></CtlIcon>
        <CtlIcon $ml={24} $w={20}><Svg w={18} h={20} vb="0 0 18 20"><rect y="1" width="4" height="2" /><rect x="6" y="1" width="12" height="2" /><rect y="7" width="4" height="2" /><rect x="6" y="7" width="12" height="2" /><rect y="13" width="4" height="2" /><rect x="6" y="13" width="12" height="2" /><rect y="18" width="4" height="2" /><rect x="6" y="18" width="12" height="2" /></Svg></CtlIcon>
      </ControlBar>

      <Workspace>
        <LeftTools>
          <CollapseStrip>‹‹</CollapseStrip>
          <GripRow $h={29}><GripH /></GripRow>
          <ToolGrid>
            {toolIcons.map(([icon, fly], i) => (
              <ToolCell key={i} $sel={i === 0}>{icon}{fly && <Flyout />}</ToolCell>
            ))}
          </ToolGrid>
          <ToolRule />
          <ColorArea>
            <FillBox />
            <StrokeBox>
              <Svg w={51} h={51} vb="0 0 51 51"><rect width="51" height="51" fill="#fff" /><rect x="14" y="14" width="24" height="24" fill="#555" stroke="#333" strokeWidth="3" /><path d="M0 51L51 0" stroke="#f40000" strokeWidth="4" /></Svg>
            </StrokeBox>
            <SwapSlot><Svg s={20} vb={V24}><path d="M4 3l6 1-1 3c6 0 11 4 11 11l3 0-5 5-5-5 3 0c0-4-3-7-7-7l-1 3z" /></Svg></SwapSlot>
            <DefaultSlot>
              <Svg s={20}><rect x="7" y="7" width="12" height="12" fill="#000" stroke="#ddd" /><rect x="1" y="1" width="12" height="12" fill="#fff" stroke="#000" strokeWidth="1.500" /></Svg>
            </DefaultSlot>
          </ColorArea>
          <Segments $h={31}>
            <Seg $sel><Svg s={20}><rect x="1.500" y="1.500" width="17" height="17" fill="#fff" stroke="#000" strokeWidth="3" /></Svg></Seg>
            <Seg><Svg s={20}><defs><linearGradient id="gm"><stop offset="0" stopColor="#fff" /><stop offset="1" stopColor="#111" /></linearGradient></defs><rect x="1.500" y="1.500" width="17" height="17" fill="url(#gm)" stroke="#000" strokeWidth="3" /></Svg></Seg>
            <Seg><Svg s={20}><rect x="1.500" y="1.500" width="17" height="17" fill="#fff" stroke="#000" strokeWidth="3" /><path d="M2 18L18 2" stroke="#f00" strokeWidth="3.500" /></Svg></Seg>
          </Segments>
          <Segments $h={28}>
            <Seg $sel><Svg s={22} vb={V24}><circle cx="9" cy="9" r="7.500" fill="#777" stroke="#c8c8c8" strokeWidth="1.500" /><rect x="10" y="10" width="12" height="12" rx="2" fill="#c8c8c8" /></Svg></Seg>
            <Seg><Svg s={22} vb={V24}><circle cx="9" cy="9" r="7.500" fill="#5a5a5a" stroke="#c8c8c8" strokeWidth="1.500" /><rect x="11" y="11" width="10" height="10" fill="#c8c8c8" /></Svg></Seg>
            <Seg><Svg s={22} vb={V24}><circle cx="12" cy="12" r="8" fill="#5e5e5e" stroke="#717171" strokeWidth="1.500" /><path d="M12 12h8a8 8 0 0 1-8 8z" fill="#717171" /></Svg></Seg>
          </Segments>
          <CenterSlot $mt={7}>
            <Svg w={34} h={26} vb="0 0 34 26"><rect x="1" y="7" width="20" height="18" fill="#6c6c6c" stroke="#b4b4b4" strokeWidth="1.500" /><rect x="13" y="1" width="20" height="17" fill="#6c6c6c" stroke="#c8c8c8" strokeWidth="1.500" /><rect x="13" y="1" width="20" height="3" fill="#c8c8c8" /></Svg>
          </CenterSlot>
          <CenterSlot $mt={30}><Dot /><Dot /><Dot /></CenterSlot>
        </LeftTools>

        <DocArea>
          <TabStrip>
            <DocTab>Projeto Fitness.ai* @ 150% (RGB/Visualização)<TabClose>X</TabClose></DocTab>
          </TabStrip>
          <RulerRowH>
            <RulerCorner />
            <RulerTrack>{rulerH.map(v => <RulerH key={v}>{v}</RulerH>)}</RulerTrack>
            <ScrollCap><ChevronUp size={20} strokeWidth={1.600} /></ScrollCap>
          </RulerRowH>
          <CanvasRow>
            <RulerV>
              <RulerVCell $first><span>0</span></RulerVCell>
              {rulerV.map(v => (
                <RulerVCell key={v}>{String(v).split("").map((d, i) => <span key={i}>{d}</span>)}</RulerVCell>
              ))}
              <RulerVCell />
            </RulerV>
            <Canvas viewBox="127 158 1648 967">
              <circle cx="1734" cy="730" r="840" fill="#fff" stroke="#4d7dff" strokeWidth="1" />
              <g fill="none" stroke="#4d7dff" strokeWidth="1">
                {contours.map((d, i) => <path key={i} d={d} />)}
                <path d={strokes} />
                <path d="M127 500L894 594M127 584L895 689" />
              </g>
              <polyline points={scribble} fill="none" stroke="#000" strokeWidth="1" />
            </Canvas>
            <ScrollV>
              <ThumbV />
              <ScrollVBottom><ChevronDown size={20} strokeWidth={1.600} /></ScrollVBottom>
            </ScrollV>
          </CanvasRow>
          <StatusBar>
            <StatusCombo $w={102}><StatusField>150%</StatusField><StatusCaret><ChevronDown size={15} strokeWidth={2} /></StatusCaret></StatusCombo>
            <NavGroup $w={63}>
              <Svg w={12} h={14} vb="0 0 12 14"><rect width="2" height="14" /><path d="M12 0v14L3 7z" /></Svg>
              <Svg w={10} h={14} vb="0 0 10 14"><path d="M10 0v14L1 7z" /></Svg>
            </NavGroup>
            <StatusCombo $w={87}><StatusField>1</StatusField><StatusCaret><ChevronDown size={15} strokeWidth={2} /></StatusCaret></StatusCombo>
            <NavGroup $w={61}>
              <Svg w={10} h={14} vb="0 0 10 14"><path d="M0 0v14L9 7z" /></Svg>
              <Svg w={12} h={14} vb="0 0 12 14"><path d="M0 0v14L9 7z" /><rect x="10" width="2" height="14" /></Svg>
            </NavGroup>
            <StatusMode>Seleção</StatusMode>
            <PlayBtn />
            <HScroll>
              <ChevronLeft size={20} strokeWidth={1.600} />
              <ThumbH />
              <HEnd><ChevronRight size={20} strokeWidth={1.600} /></HEnd>
            </HScroll>
          </StatusBar>
        </DocArea>

        <RightDock>
          <DockHead><DockHeadCell>‹‹</DockHeadCell><DockHeadCell>‹‹</DockHeadCell></DockHead>
          <DockCols>
            <DockCol>
              {Dock1.map((g, i) => (
                <DockGroup key={i}>{grip}{g.map(n => <DockBtn key={n}>{dockIcons[n]}</DockBtn>)}</DockGroup>
              ))}
            </DockCol>
            <DockCol>
              <DockGroup>{grip}<DockBtn>{dockIcons.cube}</DockBtn><DockBtn>{dockIcons.lib}</DockBtn></DockGroup>
            </DockCol>
          </DockCols>
        </RightDock>
      </Workspace>

      <Taskbar>
        <StartBtn><FaWindows /></StartBtn>
        <SearchBox><Search size={21} strokeWidth={1.500} style={{ transform: "scaleX(-1)" }} />Pesquisar</SearchBox>
        <TaskBtn $w={50} $ml={5}>
          <Svg w={22} h={22} vb="0 0 22 22"><g fill="none" stroke="#fff" strokeWidth="1.300"><path d="M1 1h13M1 21h13M14 5H1v12h13zM19 1v3M19 9v4M19 18v3" /></g></Svg>
        </TaskBtn>
        <TaskBtn $w={78}>
          <Svg w={28} h={28} vb="0 0 28 28"><path d="M1 4h10l3 3h13v18H1z" fill="#f4c542" /><path d="M1 10h26v15H1z" fill="#ffe08a" /><path d="M8 25v-8l6-4 6 4v8h-4v-5h-4v5z" fill="#2f8fdc" /></Svg>
        </TaskBtn>
        <TaskBtn $w={46}><JwTile>JW</JwTile></TaskBtn>
        <TaskBtn $w={76}>
          <Svg w={28} h={30} vb="0 0 28 30"><rect width="28" height="30" rx="3" fill="#b30b00" /><path d="M5 23c5-2 8-8 9-15 0-3-3-3-2 1 2 6 5 9 11 9 2 0 1-2-2-2-6 0-11 3-16 7z" fill="none" stroke="#fff" strokeWidth="1.800" /></Svg>
        </TaskBtn>
        <TaskBtn $w={50}>
          <Svg s={32}>
            <defs><linearGradient id="eg" x1="0" y1="0" x2="1" y2="1"><stop offset="0" stopColor="#35c1f1" /><stop offset=".6" stopColor="#34c06c" /><stop offset="1" stopColor="#1b6ec2" /></linearGradient></defs>
            <circle cx="16" cy="16" r="15" fill="url(#eg)" />
            <path d="M2 20C3 30 12 32 20 29 12 28 8 22 12 16c3-3 9-3 12 1 1-5-6-9-12-7C6 11 3 15 2 20z" fill="#0c3f8f" />
            <circle cx="21" cy="19" r="6" fill="#1d1d1d" />
          </Svg>
        </TaskBtn>
        <TaskBtn $w={51} $ml={12} $line><ChromeBall /></TaskBtn>
        <TaskBtn $w={61} $ml={6} $active $line><AiLogo $size={28}>Ai</AiLogo></TaskBtn>
        <Tray>
          <TrayIcon $ml={0}>
            <Svg s={32}><circle cx="14" cy="15" r="13" fill="#f39c12" /><circle cx="26" cy="4" r="3.500" fill="#c92a1c" /><path d="M7 30a5 5 0 0 1 0-10c1-4 8-5 11-1 4-2 9 1 8 5 4 1 4 6 0 6z" fill="#b8d4ee" /></Svg>
          </TrayIcon>
          <WeatherText $ml={8}>28°C</WeatherText>
          <WeatherText $ml={11}>Parc ensolarado</WeatherText>
          <TrayIcon $ml={19}><ChevronUp size={22} strokeWidth={1.500} /></TrayIcon>
          <TrayIcon $ml={10}>
            <Svg s={22} vb={V24}><path d="M5 18a5 5 0 0 1 0-10c1-4 8-5 11-1 3 0 5 3 4 6z" fill="#c8c8c8" /><circle cx="17" cy="17" r="6" fill="#d6202c" /><path d="M15 15l4 4M19 15l-4 4" stroke="#fff" strokeWidth="1.500" /></Svg>
          </TrayIcon>
          <TrayIcon $ml={8}>
            <Svg s={22} vb={V24}><g fill="none" stroke="#e8e8e8" strokeWidth="1.200"><rect x="3" y="6" width="11" height="11" rx="2" /><path d="M14 10l6-3v9l-6-3M3 2h11M3 21h11" /></g></Svg>
          </TrayIcon>
          <TrayIcon $ml={10}><Volume2 size={22} strokeWidth={1.200} /></TrayIcon>
          <TrayIcon $ml={8}><Wifi size={20} strokeWidth={1.300} /></TrayIcon>
          <TrayStack $w={44} $ml={3}><span>POR</span><span>PTB2</span></TrayStack>
          <TrayStack $w={78} $ml={8}><span>12:39</span><span>14/02/2023</span></TrayStack>
          <TrayIcon $ml={22}>
            <Svg w={22} h={26} vb="0 0 22 26"><path d="M1 1h20v20h-8l-2 3-2-3H1z" fill="#fff" /><path d="M5 6h12M5 10h12M5 14h8" stroke="#222" strokeWidth="1.300" /></Svg>
          </TrayIcon>
          <TrayIcon $ml={30} />
        </Tray>
      </Taskbar>

      <Panel $l={1055} $t={16} $w={347} $h={212}>
        <PanelDragBar />
        <PanelTabs>
          <PanelTab $w={79}>Transformar</PanelTab>
          <PanelTab $w={69}>Alinhar</PanelTab>
          <PanelTab $w={101} $active>Pathfinder</PanelTab>
          <PanelTabTools>
            <TabGlyph>››</TabGlyph><TabDivider />
            <Svg w={15} h={12} vb="0 0 15 12"><path d="M0 1h15M0 6h15M0 11h15" stroke="currentColor" /></Svg>
          </PanelTabTools>
        </PanelTabs>
        <PanelHeading $mt={12}>Modos de forma:</PanelHeading>
        <ModeRow>
          <ModeBtn $w={55}><PF k="unite" /></ModeBtn>
          <ModeBtn $w={56}><PF k="minus" /></ModeBtn>
          <ModeBtn $w={56}><PF k="intersect" /></ModeBtn>
          <ModeBtn $w={24}><PF k="exclude" /></ModeBtn>
          <ExpandBtn>Expandir</ExpandBtn>
        </ModeRow>
        <PanelHeading $mt={14}>Pathfinders:</PanelHeading>
        <FinderRow>
          {(["divide", "trim", "merge", "crop", "outline", "minusback"] as Kind[]).map(k => <PF key={k} k={k} />)}
        </FinderRow>
      </Panel>

      <Panel $l={1402} $t={2} $w={171} $h={163}>
        <MiniTop><span>››</span><span>X</span></MiniTop>
        <GripRow $h={13}><GripH /></GripRow>
        <MiniRow>
          <Svg s={26}><rect x="4" y="4" width="18" height="18" fill="none" stroke={ICON} strokeWidth="1.500" strokeDasharray="3 2" /><rect x="1" y="1" width="5" height="5" fill={ICON} /><rect x="20" y="1" width="5" height="5" fill={ICON} /><rect x="1" y="20" width="5" height="5" fill={ICON} /><rect x="20" y="20" width="5" height="5" fill={ICON} /><rect x="12" y="12" width="2" height="2" fill={ICON} /></Svg>
          Transformar
        </MiniRow>
        <MiniRow>
          <Svg s={26}><rect x="1" y="0" width="1" height="26" fill={ICON} /><rect x="4" y="3" width="12" height="9" fill={ICON} /><rect x="4" y="15" width="21" height="8" fill={ICON} /></Svg>
          Alinhar
        </MiniRow>
        <MiniRow $sel>
          <Svg s={26}><rect x="1" y="1" width="15" height="15" fill={ICON} /><rect x="9" y="9" width="16" height="16" fill={ICON} /><rect x="9" y="9" width="7" height="7" fill={ICON} stroke="#383838" strokeWidth="1.200" /></Svg>
          Pathfinder
        </MiniRow>
      </Panel>

      <Watermark>
        <WaterTitle>Ativar o Windows</WaterTitle>
        <WaterSub>Acesse Configurações para ativar o Windows.</WaterSub>
      </Watermark>
    </Screen>
  );
}
